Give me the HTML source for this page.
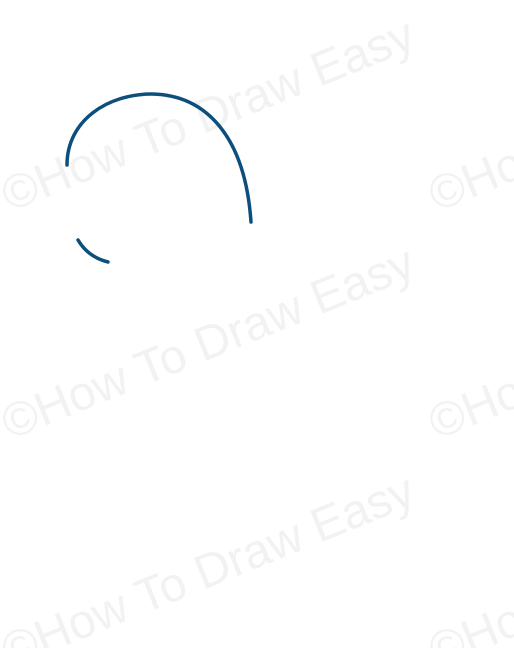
<!DOCTYPE html>
<html><head><meta charset="utf-8"><style>
html,body{margin:0;padding:0;background:#fff;width:514px;height:648px;overflow:hidden}
</style></head><body>
<svg width="514" height="648" viewBox="0 0 514 648" xmlns="http://www.w3.org/2000/svg">
<g font-family="Liberation Sans, sans-serif" font-size="48" fill="#f2f2f2">
<text transform="translate(10,212) rotate(-22)">©How To Draw Easy</text>
<text transform="translate(10,440) rotate(-22)">©How To Draw Easy</text>
<text transform="translate(10,668) rotate(-22)">©How To Draw Easy</text>
<text transform="translate(437,212) rotate(-22)">©How To Draw Easy</text>
<text transform="translate(437,440) rotate(-22)">©How To Draw Easy</text>
<text transform="translate(437,668) rotate(-22)">©How To Draw Easy</text>
</g>
<g fill="none" stroke="#0d4f7c" stroke-width="3.5" stroke-linecap="round">
<path d="M67,165 C67,120 108,94 152,94 C205,95 245,135 251,222"/>
<path d="M78,240 Q88,257 108,262"/>
</g>
</svg>
</body></html>
